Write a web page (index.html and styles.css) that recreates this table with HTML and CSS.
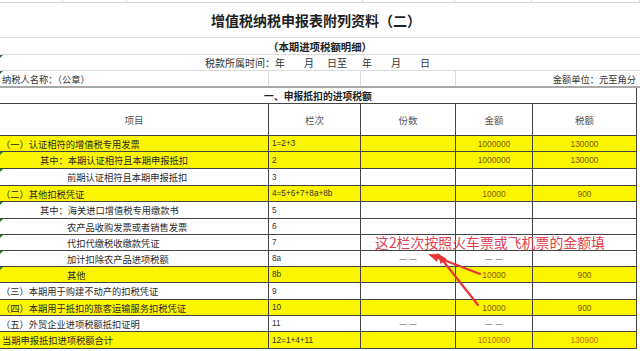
FILE: index.html
```html
<!DOCTYPE html>
<html lang="zh-CN">
<head>
<meta charset="utf-8">
<title>增值税纳税申报表附列资料（二）</title>
<link rel="stylesheet" href="styles.css">
</head>
<body>
<div class="sheet">
  <div class="strip"><i></i><i></i><i></i><i></i><i></i><i></i></div>
  <div class="title">增值税纳税申报表附列资料（二）</div>
  <div class="subtitle">（本期进项税额明细）</div>
  <div class="period mark"><span>税款所属时间：</span><span>年</span><span class="g19">月</span><span class="g13">日至</span><span class="g15">年</span><span class="g19">月</span><span class="g19">日</span></div>
  <div class="namerow mark">
    <div class="nc">纳税人名称：（公章）</div>
    <div class="nc"></div>
    <div class="nc"></div>
    <div class="nc unit">金额单位：元至角分</div>
  </div>
  <div class="section">一、申报抵扣的进项税额</div>
  <div class="trow head">
    <div class="c">项目</div>
    <div class="c">栏次</div>
    <div class="c">份数</div>
    <div class="c">金额</div>
    <div class="c">税额</div>
  </div>

  <div class="trow h16 y">
    <div class="lbl l0">（一）认证相符的增值税专用发票</div>
    <div class="no">1=2+3</div>
    <div class="c"></div>
    <div class="c num">1000000</div>
    <div class="c num">130000</div>
  </div>
  <div class="trow h17 y mark">
    <div class="lbl l1">其中：本期认证相符且本期申报抵扣</div>
    <div class="no">2</div>
    <div class="c"></div>
    <div class="c num">1000000</div>
    <div class="c num">130000</div>
  </div>
  <div class="trow h17 mark">
    <div class="lbl l2">前期认证相符且本期申报抵扣</div>
    <div class="no">3</div>
    <div class="c"></div>
    <div class="c"></div>
    <div class="c"></div>
  </div>
  <div class="trow h16 y">
    <div class="lbl l0">（二）其他扣税凭证</div>
    <div class="no">4=5+6+7+8a+8b</div>
    <div class="c"></div>
    <div class="c num">10000</div>
    <div class="c num">900</div>
  </div>
  <div class="trow h17 mark">
    <div class="lbl l1">其中：海关进口增值税专用缴款书</div>
    <div class="no">5</div>
    <div class="c"></div>
    <div class="c"></div>
    <div class="c"></div>
  </div>
  <div class="trow h16 mark">
    <div class="lbl l2">农产品收购发票或者销售发票</div>
    <div class="no">6</div>
    <div class="c"></div>
    <div class="c"></div>
    <div class="c"></div>
  </div>
  <div class="trow h16 mark">
    <div class="lbl l2">代扣代缴税收缴款凭证</div>
    <div class="no">7</div>
    <div class="c"></div>
    <div class="c"></div>
    <div class="c"></div>
  </div>
  <div class="trow h16 mark">
    <div class="lbl l2">加计扣除农产品进项税额</div>
    <div class="no">8a</div>
    <div class="c"><span class="dash">——</span></div>
    <div class="c"><span class="dash">——</span></div>
    <div class="c"></div>
  </div>
  <div class="trow h16 y mark">
    <div class="lbl l2">其他</div>
    <div class="no">8b</div>
    <div class="c"></div>
    <div class="c num">10000</div>
    <div class="c num">900</div>
  </div>
  <div class="trow h17">
    <div class="lbl l0">（三）本期用于购建不动产的扣税凭证</div>
    <div class="no">9</div>
    <div class="c"></div>
    <div class="c"></div>
    <div class="c"></div>
  </div>
  <div class="trow h16 y">
    <div class="lbl l0">（四）本期用于抵扣的旅客运输服务扣税凭证</div>
    <div class="no">10</div>
    <div class="c"></div>
    <div class="c num">10000</div>
    <div class="c num">900</div>
  </div>
  <div class="trow h16">
    <div class="lbl l0">（五）外贸企业进项税额抵扣证明</div>
    <div class="no">11</div>
    <div class="c"><span class="dash">——</span></div>
    <div class="c"><span class="dash">——</span></div>
    <div class="c"></div>
  </div>
  <div class="trow h17 y">
    <div class="lbl lt">当期申报抵扣进项税额合计</div>
    <div class="no">12=1+4+11</div>
    <div class="c"></div>
    <div class="c num tot">1010000</div>
    <div class="c num tot">130900</div>
  </div>

  <div class="note">这2栏次按照火车票或飞机票的金额填</div>
  <svg class="arrows" width="640" height="351" viewBox="0 0 640 351" aria-hidden="true">
    <line x1="480" y1="274" x2="436" y2="257" />
    <polygon points="428,254 439.7,254.2 436.9,261.7" />
    <line x1="478" y1="305" x2="442" y2="259.5" />
    <polygon points="437,253 446.9,259.1 440.7,264.1" />
  </svg>
</div>
</body>
</html>
```

FILE: styles.css
```css
html, body {
  margin: 0;
  padding: 0;
  background: #fff;
}

.sheet {
  position: relative;
  width: 640px;
  height: 351px;
  overflow: hidden;
  font-family: "Noto Sans CJK SC", "Noto Sans", sans-serif;
  color: #333;
}

.strip {
  height: 3px;
  box-sizing: border-box;
  border-bottom: 1px solid #d4d4d4;
  display: grid;
  grid-template-columns: 63px 64px 236px 92px 77px 1fr;
}
.strip i {
  border-right: 1px solid #dcdcdc;
}

.title {
  height: 35px;
  box-sizing: border-box;
  border-bottom: 1px solid #dadada;
  display: flex;
  align-items: center;
  justify-content: center;
  padding-right: 8px;
  font-size: 14px;
  font-weight: 700;
  color: #1e1e1e;
}

.subtitle {
  height: 17px;
  box-sizing: border-box;
  border-bottom: 1px solid #dadada;
  display: flex;
  align-items: center;
  justify-content: center;
  font-size: 10.4px;
  font-weight: 700;
  color: #222;
}

.period {
  position: relative;
  height: 16px;
  box-sizing: border-box;
  border-bottom: 1px solid #dadada;
  display: flex;
  align-items: center;
  padding-left: 205px;
  font-size: 10px;
  color: #333;
}
.period .g19 { margin-left: 19px; }
.period .g13 { margin-left: 13px; }
.period .g15 { margin-left: 15px; }

.namerow {
  position: relative;
  height: 17px;
  box-sizing: border-box;
  border-bottom: 2px solid #a9a9a9;
  display: grid;
  grid-template-columns: 269px 92px 95px 1fr;
  font-size: 9.25px;
}
.namerow .nc {
  display: flex;
  align-items: center;
  border-right: 1px solid #dadada;
  white-space: nowrap;
  padding-left: 2px;
}
.namerow .unit {
  border-right: 0;
  justify-content: flex-end;
  padding-right: 4px;
}

.section {
  width: 637px;
  height: 16px;
  box-sizing: border-box;
  border-right: 1px solid #444;
  border-bottom: 1px solid #444;
  display: flex;
  align-items: center;
  justify-content: center;
  font-size: 9.8px;
  font-weight: 700;
  color: #222;
}

.trow {
  position: relative;
  width: 637px;
  display: grid;
  grid-template-columns: 269px 92px 95px 77px 104px;
  font-size: 9.25px;
  color: #2a2a2a;
}
.trow > div {
  box-sizing: border-box;
  border-right: 1px solid #444;
  border-bottom: 1px solid #444;
  display: flex;
  align-items: center;
  white-space: nowrap;
}
.trow.head { height: 32px; }
.trow.head .c { color: #555; font-size: 9.5px; }
.trow.h16 { height: 16px; }
.trow.h17 { height: 17px; }
.trow.y > div { background: #fcf500; }

.trow .c { justify-content: center; }
.l0 { padding-left: 1px; }
.l1 { padding-left: 40px; }
.l2 { padding-left: 67px; }
.lt { padding-left: 2px; }

.no {
  padding-left: 3px;
  font-family: "Liberation Sans", Arial, sans-serif;
  font-size: 8.2px;
  color: #333;
}
.num {
  font-family: "Liberation Sans", Arial, sans-serif;
  font-size: 8.4px;
  color: #7a5a00;
}
.num.tot { color: #c66c00; }
.dash {
  font-family: "Liberation Sans", Arial, sans-serif;
  font-size: 7px;
  letter-spacing: 3px;
  margin-right: -3px;
  color: #555;
}

.mark::before {
  content: "";
  position: absolute;
  left: 0;
  top: 0;
  border-top: 3px solid #2d7a2d;
  border-right: 3px solid transparent;
  z-index: 2;
}

.note {
  position: absolute;
  left: 375px;
  top: 235px;
  font-size: 13.9px;
  line-height: 14px;
  color: #e0404f;
  white-space: nowrap;
}

.arrows {
  position: absolute;
  left: 0;
  top: 0;
}
.arrows line {
  stroke: #e83535;
  stroke-width: 2.2;
  stroke-linecap: round;
}
.arrows polygon {
  fill: #e83535;
}
```
